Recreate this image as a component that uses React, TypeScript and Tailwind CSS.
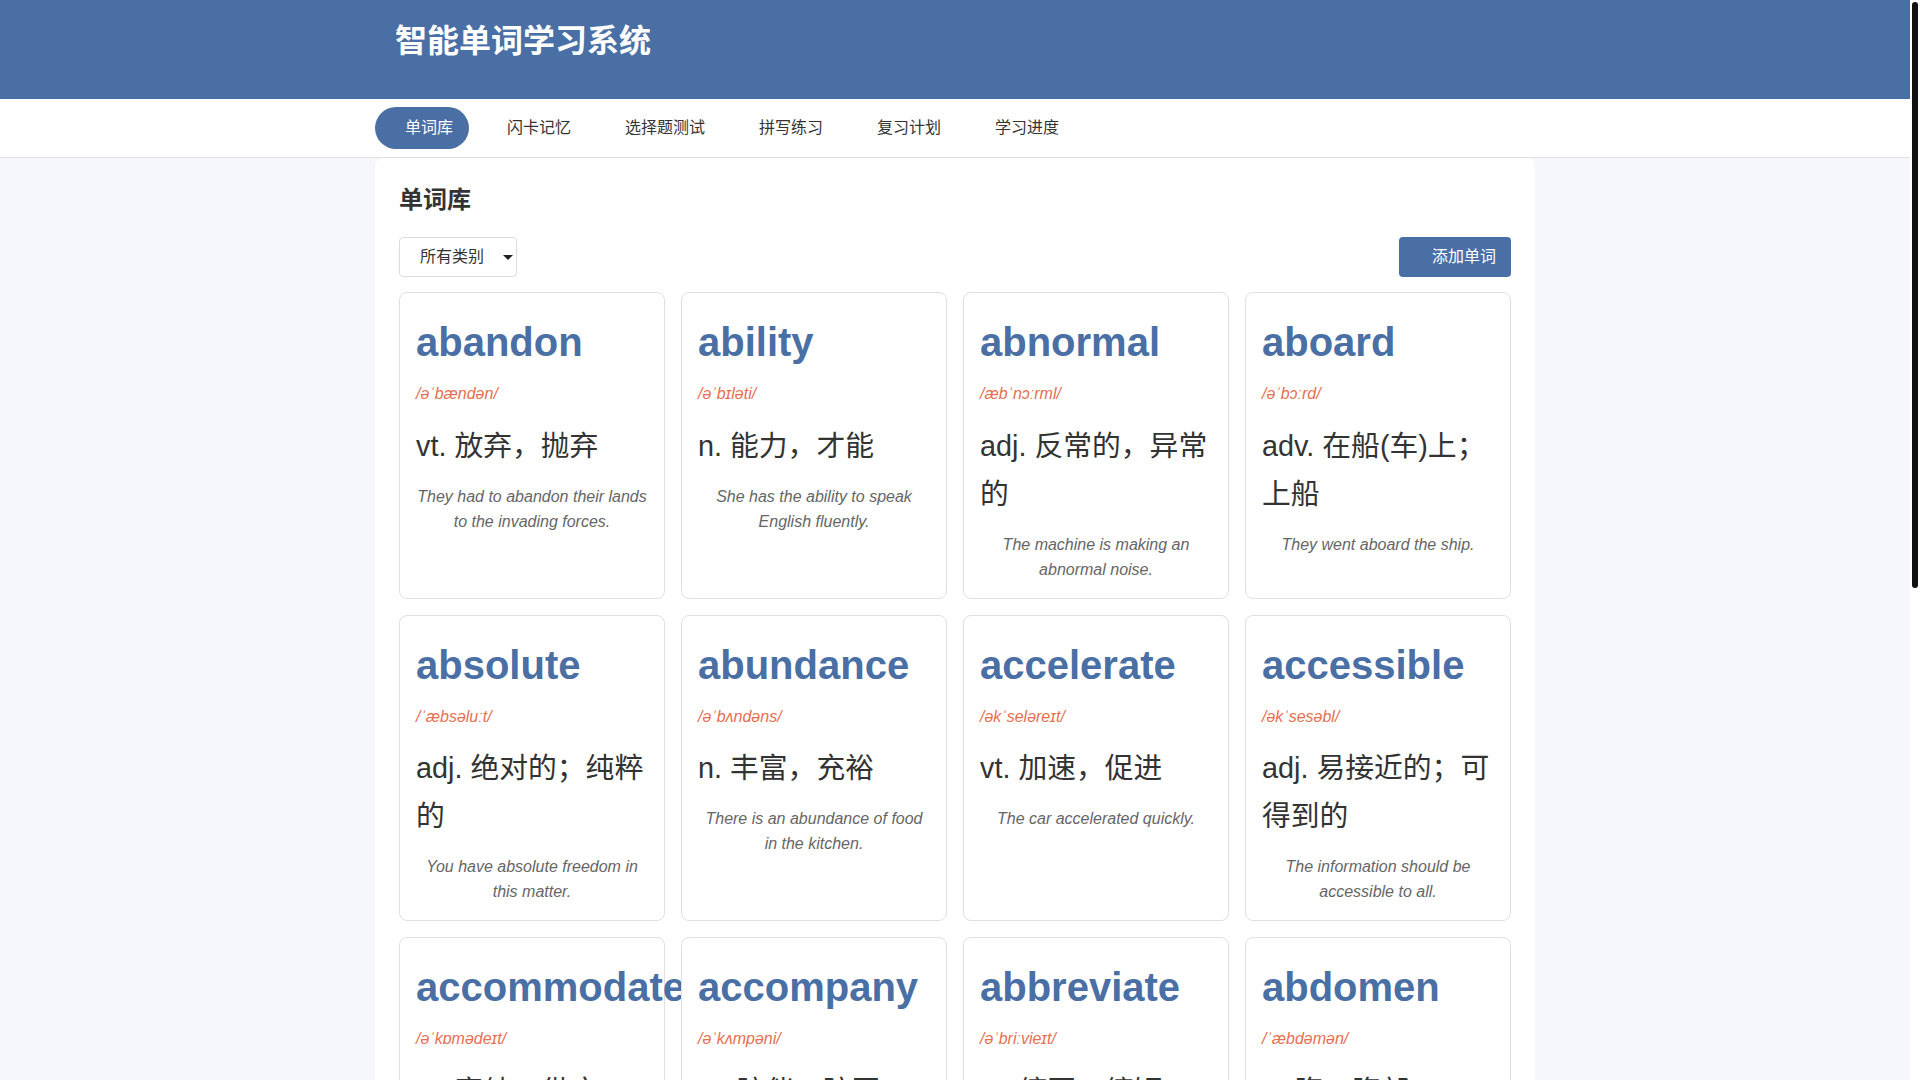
const navItems = ["单词库", "闪卡记忆", "选择题测试", "拼写练习", "复习计划", "学习进度"];

type Word = {
  word: string;
  phonetic: string;
  meaning: string;
  example: string;
};

const words: Word[] = [
  { word: "abandon", phonetic: "/əˈbændən/", meaning: "vt. 放弃，抛弃", example: "They had to abandon their lands to the invading forces." },
  { word: "ability", phonetic: "/əˈbɪləti/", meaning: "n. 能力，才能", example: "She has the ability to speak English fluently." },
  { word: "abnormal", phonetic: "/æbˈnɔːrml/", meaning: "adj. 反常的，异常的", example: "The machine is making an abnormal noise." },
  { word: "aboard", phonetic: "/əˈbɔːrd/", meaning: "adv. 在船(车)上；上船", example: "They went aboard the ship." },
  { word: "absolute", phonetic: "/ˈæbsəluːt/", meaning: "adj. 绝对的；纯粹的", example: "You have absolute freedom in this matter." },
  { word: "abundance", phonetic: "/əˈbʌndəns/", meaning: "n. 丰富，充裕", example: "There is an abundance of food in the kitchen." },
  { word: "accelerate", phonetic: "/əkˈseləreɪt/", meaning: "vt. 加速，促进", example: "The car accelerated quickly." },
  { word: "accessible", phonetic: "/əkˈsesəbl/", meaning: "adj. 易接近的；可得到的", example: "The information should be accessible to all." },
  { word: "accommodate", phonetic: "/əˈkɒmədeɪt/", meaning: "vt. 容纳；供应", example: "The hotel can accommodate 500 guests." },
  { word: "accompany", phonetic: "/əˈkʌmpəni/", meaning: "vt. 陪伴，陪同", example: "He will accompany you to the station." },
  { word: "abbreviate", phonetic: "/əˈbriːvieɪt/", meaning: "vt. 缩写，缩短", example: "The word is often abbreviated." },
  { word: "abdomen", phonetic: "/ˈæbdəmən/", meaning: "n. 腹，腹部", example: "He felt a sharp pain in his abdomen." },
  { word: "abide", phonetic: "/əˈbaɪd/", meaning: "vi. 遵守；忍受", example: "You must abide by the rules." },
  { word: "abolish", phonetic: "/əˈbɒlɪʃ/", meaning: "vt. 废除，取消", example: "They voted to abolish the old law." },
  { word: "abroad", phonetic: "/əˈbrɔːd/", meaning: "adv. 在国外；到海外", example: "She plans to study abroad next year." },
  { word: "abrupt", phonetic: "/əˈbrʌpt/", meaning: "adj. 突然的；唐突的", example: "The meeting came to an abrupt end." },
  { word: "absence", phonetic: "/ˈæbsəns/", meaning: "n. 缺席；缺乏", example: "His absence was noticed by everyone." },
  { word: "absorb", phonetic: "/əbˈzɔːrb/", meaning: "vt. 吸收；吸引", example: "Plants absorb water from the soil." },
  { word: "abstract", phonetic: "/ˈæbstrækt/", meaning: "adj. 抽象的", example: "Beauty is an abstract idea." },
  { word: "absurd", phonetic: "/əbˈsɜːrd/", meaning: "adj. 荒谬的，可笑的", example: "It was an absurd suggestion." },
];

function WordCard({ item }: { item: Word }) {
  return (
    <div className="bg-white border border-[#e0e0e0] rounded-lg pt-[19px] pb-4 px-4">
      <div className="text-[40px] leading-[60px] font-bold text-[#4a6fa5] whitespace-nowrap mb-[9px]">{item.word}</div>
      <div className="text-base leading-[25.6px] italic text-[#e76f51] mb-[15px]">{item.phonetic}</div>
      <div className="text-[28.8px] leading-[48px] text-[#333] mb-[14px]">{item.meaning}</div>
      <div className="text-base leading-[25px] italic text-[#666] text-center">{item.example}</div>
    </div>
  );
}

export default function App() {
  return (
    <div className="min-h-screen mr-[10px] bg-[#f5f7fa] font-['Liberation_Sans','Noto_Sans_CJK_SC',sans-serif] text-[#333]">
      {/* header */}
      <header className="bg-[#4a6fa5] h-[99px]">
        <div className="max-w-[1160px] mx-auto px-5 pt-[17px]">
          <h1 className="text-[32px] leading-[48px] font-bold text-white">智能单词学习系统</h1>
        </div>
      </header>

      {/* nav */}
      <nav className="bg-white border-b border-[#e0e0e0]">
        <div className="max-w-[1160px] mx-auto flex gap-2 py-2">
          {navItems.map((n, i) => (
            <button
              key={n}
              type="button"
              className={`h-[42px] flex items-center rounded-full pl-[30px] pr-4 text-base ${
                i === 0 ? "bg-[#4a6fa5] text-white" : "text-[#333]"
              }`}
            >
              {n}
            </button>
          ))}
        </div>
      </nav>

      {/* main panel */}
      <main className="max-w-[1160px] mx-auto bg-white rounded-lg p-6 mb-6">
        <h2 className="text-2xl leading-9 font-bold text-[#333] mb-[19px]">单词库</h2>

        <div className="flex items-center justify-between mb-[15px]">
          <div className="h-10 w-[118px] border border-[#ddd] rounded flex items-center pl-5 pr-[3px] text-base text-[#333] bg-white">
            <span>所有类别</span>
            <svg className="ml-auto" width="10" height="5" viewBox="0 0 10 5">
              <path d="M0 0 L10 0 L5 5 Z" fill="#222" />
            </svg>
          </div>
          <button type="button" className="h-10 bg-[#4a6fa5] text-white rounded pl-[33px] pr-[15px] text-base">
            添加单词
          </button>
        </div>

        <div className="grid grid-cols-4 gap-4">
          {words.map((w) => (
            <WordCard key={w.word} item={w} />
          ))}
        </div>
      </main>

      {/* scrollbar thumb */}
      <div className="fixed top-[2px] right-[2px] w-[6px] h-[586px] rounded-full bg-[#111]" />
    </div>
  );
}
